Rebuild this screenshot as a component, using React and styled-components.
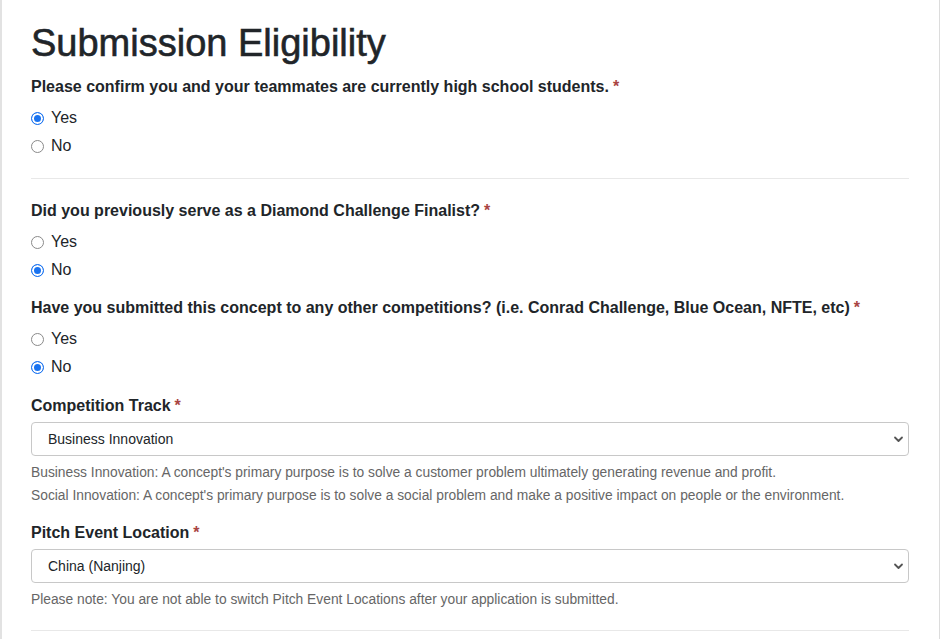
import React from 'react'
import styled, { createGlobalStyle } from 'styled-components'

const GlobalStyle = createGlobalStyle`
    body {
        margin: 0;
        background: #fff;
        font-family: "Liberation Sans", Arial, Helvetica, sans-serif;
        color: #212529;
    }
`;

const Page = styled.div`
    width: 878px;
    min-height: 639px;
    padding: 19px 30px 0 29px;
    border-left: 2px solid #e2e2e2;
    border-right: 1px solid #dcdcdc;
    box-sizing: content-box;
`;

const Title = styled.h1`
    margin: 0 0 8px;
    font-size: 38px;
    font-weight: 400;
    line-height: 48px;
    -webkit-text-stroke: 0.6px #212529;
`;

const Group = styled.div`
    margin-bottom: ${p => p.$gap ?? 14}px;
`;

const Label = styled.div`
    font-size: 16px;
    font-weight: 700;
    line-height: 24px;
    margin-bottom: ${p => p.$gap || 7}px;
`;

const Required = styled.span`
    color: #a94442;
    margin-left: 4px;
`;

const RadioList = styled.div`
    display: flex;
    flex-direction: column;
    gap: 4px;
`;

const RadioRow = styled.label`
    display: flex;
    align-items: center;
    gap: 7px;
    font-size: 16px;
    line-height: 24px;
`;

const Radio = styled.input.attrs({ type: 'radio' })`
    appearance: none;
    margin: 0;
    width: 13px;
    height: 13px;
    border-radius: 50%;
    border: 1px solid #8a8a8a;
    background: #fff;
    box-sizing: border-box;

    &:checked {
        border-color: #1a73f0;
        background: #1a73f0;
        box-shadow: inset 0 0 0 2px #fff;
    }
`;

const Divider = styled.hr`
    border: 0;
    border-top: 1px solid #e8e8e8;
    margin: ${p => p.$top || 20}px 0 ${p => p.$bottom || 20}px;
`;

const SelectWrap = styled.div`
    position: relative;
`;

const Select = styled.select`
    appearance: none;
    width: 100%;
    height: 34px;
    padding: 0 30px 0 16px;
    border: 1px solid #c8c8c8;
    border-radius: 4px;
    background: #fff;
    font-family: inherit;
    font-size: 14px;
    color: #212529;
    outline: none;
`;

const Chevron = styled.svg`
    position: absolute;
    right: 4px;
    top: 14px;
    pointer-events: none;
`;

const Help = styled.div`
    font-size: 13.8px;
    line-height: 20px;
    color: #666;
    margin-top: ${p => p.$top || 3}px;
`;

const RadioField = ({ name, label, value, gap }) => (
    <Group $gap={gap}>
        <Label>{label}<Required>*</Required></Label>
        <RadioList>
            {['Yes', 'No'].map(opt =>
                <RadioRow key={opt}>
                    <Radio name={name} defaultChecked={value === opt} />
                    {opt}
                </RadioRow>
            )}
        </RadioList>
    </Group>
)

const SelectField = ({ label, value, children, gap }) => (
    <Group $gap={gap}>
        <Label $gap={4}>{label}<Required>*</Required></Label>
        <SelectWrap>
            <Select defaultValue={value}>
                <option>{value}</option>
            </Select>
            <Chevron width="12" height="7" viewBox="0 0 12 7">
                <path d="M2 1.5 L5.5 5 L9 1.5" fill="none" stroke="#555" strokeWidth="1.8" strokeLinecap="round" strokeLinejoin="round" />
            </Chevron>
        </SelectWrap>
        {children}
    </Group>
)

const App = () => {
    return (
        <Page>
            <GlobalStyle />
            <Title>Submission Eligibility</Title>
            <RadioField name="hs" value="Yes" gap={0}
                label="Please confirm you and your teammates are currently high school students." />
            <Divider />
            <RadioField name="finalist" value="No"
                label="Did you previously serve as a Diamond Challenge Finalist?" />
            <RadioField name="other" value="No" gap={15}
                label="Have you submitted this concept to any other competitions? (i.e. Conrad Challenge, Blue Ocean, NFTE, etc)" />
            <SelectField label="Competition Track" value="Business Innovation" gap={15}>
                <Help $top={7}>Business Innovation: A concept's primary purpose is to solve a customer problem ultimately generating revenue and profit.</Help>
                <Help>Social Innovation: A concept's primary purpose is to solve a social problem and make a positive impact on people or the environment.</Help>
            </SelectField>
            <SelectField label="Pitch Event Location" value="China (Nanjing)" gap={0}>
                <Help $top={7}>Please note: You are not able to switch Pitch Event Locations after your application is submitted.</Help>
            </SelectField>
            <Divider $top={20} />
        </Page>
    )
}

export default App
